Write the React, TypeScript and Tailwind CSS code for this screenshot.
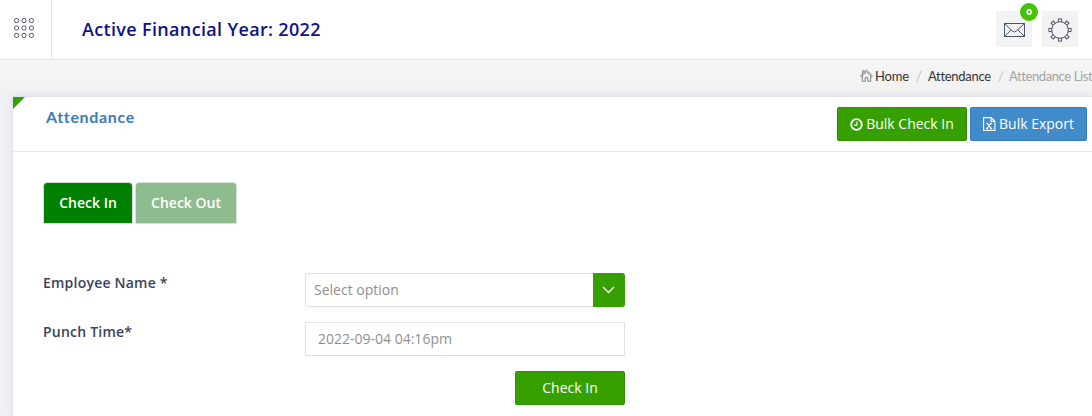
import React from "react";

const dots = [2.6, 10, 17.4];

function GridIcon() {
  return (
    <svg width="20" height="20" viewBox="0 0 20 20" fill="none" stroke="#55596b" strokeWidth="1">
      {dots.map((y) => dots.map((x) => <circle key={`${x}-${y}`} cx={x} cy={y} r="2.1" />))}
    </svg>
  );
}

function MailIcon() {
  return (
    <svg width="22" height="16" viewBox="0 0 22 16" fill="none" stroke="#4a5572" strokeWidth="1">
      <rect x="0.5" y="1.5" width="20" height="13" />
      <path d="M1 2l7.5 7q2 1.8 4 0L20 2M1 14l6-6M20 14l-6-6" />
    </svg>
  );
}

const teeth = [0, 45, 90, 135, 180, 225, 270, 315];

function GearIcon() {
  return (
    <svg width="24" height="24" viewBox="0 0 24 24" fill="none" stroke="#4a5065" strokeWidth="1">
      <circle cx="12" cy="12" r="8.3" />
      {teeth.map((a) => (
        <path key={a} d="M10.4 3.8V0.9h3.2v2.9" transform={`rotate(${a} 12 12)`} />
      ))}
    </svg>
  );
}

function HomeIcon() {
  return (
    <svg width="13" height="13" viewBox="0 0 13 13" fill="none" stroke="#777" strokeWidth="0.9">
      <path d="M0.6 6.8L6.5 1l5.9 5.8-.9.8-5-4.8-5 4.8zM2.3 7v5.3h2.9V8.6h2.6v3.7h2.9V7M2.6 4.7V1.8h1.6v1.4" />
    </svg>
  );
}

function ClockIcon() {
  return (
    <svg width="13" height="13" viewBox="0 0 13 13" fill="none" stroke="#fff">
      <circle cx="6.5" cy="6.5" r="5.3" strokeWidth="1.8" />
      <path d="M6.9 3.4v3.7H4.2" strokeWidth="1.1" />
    </svg>
  );
}

function ExcelIcon() {
  return (
    <svg width="13" height="14" viewBox="0 0 13 14" fill="none" stroke="#fff" strokeWidth="1.1">
      <path d="M0.6 0.6h7.6l3.7 3.7v9.1H0.6zM8.1 0.6v3.8h3.8" />
      <path d="M3.2 6.2h2M7.2 6.2h2M3.2 11.4h2M7.2 11.4h2M4.2 6.2l4 5.2M8.2 6.2l-4 5.2" />
    </svg>
  );
}

export default function App() {
  return (
    <div className="flex h-[416px] w-[1092px] flex-col overflow-hidden bg-[#eff1f5] font-['Open_Sans',sans-serif] text-sm whitespace-nowrap">
      <header className="flex h-[60px] shrink-0 border-b border-[#e1e2ea] bg-white">
        <div className="flex w-[52px] justify-center border-r border-[#e1e2ea] pr-[3px] pt-[18px]">
          <GridIcon />
        </div>
        <h1 className="ml-[30px] mt-[16px] text-[18px] leading-[27px] font-semibold tracking-[0.34px] text-[#10108a]">
          Active Financial Year: 2022
        </h1>
        <div className="ml-auto flex gap-[10px] pr-[14px] pt-[11px]">
          <button className="relative flex h-9 w-9 items-center justify-center bg-[#f3f3f3] pt-[2px] pl-[2px]">
            <MailIcon />
            <span className="absolute -top-2 left-6 flex h-[18px] w-[18px] items-center justify-center rounded-full bg-[#45c203] text-[10px] leading-none font-bold text-white">
              <span className="-mt-[2px]">o</span>
            </span>
          </button>
          <button className="flex h-9 w-9 items-center justify-center bg-[#f3f3f3] pt-[2px]">
            <GearIcon />
          </button>
        </div>
      </header>

      <nav className="flex h-9 shrink-0 items-center bg-linear-to-b from-[#f5f5f5] to-[#f1f1f2] pb-[3px] pl-[860px] font-['Lato',sans-serif] text-[13px] text-[#333]">
        <span className="-mt-[3px]">
          <HomeIcon />
        </span>
        <span className="ml-[2px] w-[34px] shrink-0 tracking-[-0.2px]">Home</span>
        <span className="ml-[7px] w-[12px] shrink-0 text-[#c2c2c2]">/</span>
        <span className="w-[63px] shrink-0 tracking-[-0.3px]">Attendance</span>
        <span className="ml-[7px] w-[11px] shrink-0 text-[#c2c2c2]">/</span>
        <span className="shrink-0 text-[#a3a3a3] tracking-[-0.4px]">Attendance List</span>
      </nav>

      <main className="ml-[12px] flex flex-1 flex-col border-t border-l border-[#e1e4ee] bg-white shadow-[0_0_8px_rgba(190,195,215,0.3)]">
        <div className="relative flex h-[55px] shrink-0 border-b border-[#e8e9f1] pr-[5px]">
          <svg className="absolute top-0 left-0" width="12" height="12" viewBox="0 0 12 12">
            <path d="M0 0h12L0 12z" fill="#36a000" />
          </svg>
          <h2 className="ml-[33px] mt-[8px] font-['Lato',sans-serif] text-[16px] leading-6 font-bold tracking-[0.65px] text-[#3c7db8]">
            Attendance
          </h2>
          <div className="ml-auto mt-[10px] flex gap-[3px]">
            <button className="flex h-[34px] w-[130px] items-center justify-center gap-[3px] rounded-xs border border-[#328f03] bg-[#36a000] text-white">
              <ClockIcon />
              Bulk Check In
            </button>
            <button className="flex h-[34px] w-[117px] items-center justify-center gap-[3px] rounded-xs border border-[#357ebd] bg-[#428bca] text-white">
              <ExcelIcon />
              Bulk Export
            </button>
          </div>
        </div>

        <div className="ml-[30px] mt-[30px] flex gap-[2px] font-semibold text-white">
          <button className="h-[42px] w-[90px] rounded-t border border-[#dddddd] bg-[#008000]">Check In</button>
          <button className="h-[42px] w-[102px] rounded-t border border-[#dddddd] bg-[#8fbc8f]">Check Out</button>
        </div>

        <form className="ml-[30px] mt-[49px] grid w-[582px] grid-cols-[262px_320px] gap-y-[15px]">
          <label className="leading-5 font-semibold tracking-[0.22px] text-[#39435c]">Employee Name *</label>
          <div className="flex h-[34px] rounded-[3px] border border-[#e1e1e1] text-[#8f8f8f] shadow-[0_1px_3px_rgba(0,0,0,0.04)]">
            <span className="flex-1 pl-[8px] leading-8">Select option</span>
            <span className="-m-px flex w-8 items-center justify-center rounded-r-[3px] bg-[#36a000]">
              <svg width="14" height="8" viewBox="0 0 14 8" fill="none" stroke="#fff" strokeWidth="1.3">
                <path d="M1 1l5.5 5.5L12 1" />
              </svg>
            </span>
          </div>
          <label className="leading-5 font-semibold tracking-[0.22px] text-[#39435c]">Punch Time*</label>
          <div className="h-[34px] border border-[#e1e1e1] pl-[12px] leading-8 text-[#8f8f8f]">
            2022-09-04 04:16pm
          </div>
          <button
            type="button"
            className="col-start-2 h-[34px] w-[110px] justify-self-end rounded-xs border border-[#328f03] bg-[#36a000] text-white"
          >
            Check In
          </button>
        </form>
      </main>
    </div>
  );
}
